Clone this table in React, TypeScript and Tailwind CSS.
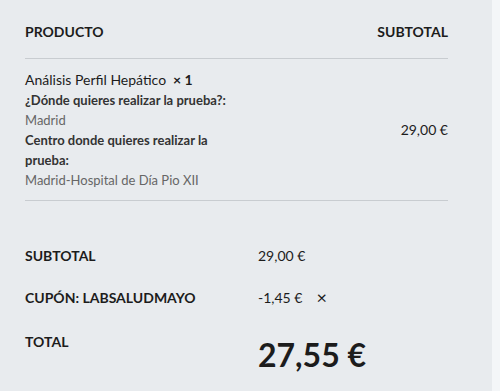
import React from "react";

const lines = [
  { label: "¿Dónde quieres realizar la prueba?:", value: "Madrid" },
  { label: "Centro donde quieres realizar la prueba:", value: "Madrid-Hospital de Día Pio XII" },
];

export default function App() {
  return (
    <div className="w-[500px] h-[391px] bg-[#f4f6f8] font-['Lato',sans-serif] text-[#1c1c1c]">
      <div className="w-[492px] h-full bg-[#e8ebee] pl-[25px] pr-[44px]">
        {/* header */}
        <div className="flex justify-between pt-[22px] pb-[16px] border-b border-[#c8ccd0] text-[14px] leading-[20px] font-bold">
          <span>PRODUCTO</span>
          <span>SUBTOTAL</span>
        </div>

        {/* product row */}
        <div className="flex items-center pt-[11px] pb-[10px] border-b border-[#c8ccd0]">
          <div className="w-[225px]">
            <div className="text-[14px] leading-[20px]">
              Análisis Perfil Hepático <strong className="font-bold">&nbsp;× 1</strong>
            </div>
            {lines.map((l) => (
              <div key={l.label} className="text-[13px] leading-[20px]">
                <div className="font-bold text-[#333]">{l.label}</div>
                <div className="text-[#666]">{l.value}</div>
              </div>
            ))}
          </div>
          <div className="flex-1 text-right text-[14px] leading-[20px]">29,00 €</div>
        </div>

        {/* totals */}
        <div className="pt-[44px]">
          <div className="flex items-center h-[20px]">
            <span className="w-[233px] text-[14px] font-bold">SUBTOTAL</span>
            <span className="text-[14px]">29,00 €</span>
          </div>
          <div className="flex items-center h-[20px] mt-[22px]">
            <span className="w-[233px] text-[14px] font-bold">CUPÓN: LABSALUDMAYO</span>
            <span className="text-[14px]">-1,45 €</span>
            <span className="ml-[14px] text-[18px] leading-none">×</span>
          </div>
          <div className="flex items-start mt-[25px]">
            <span className="w-[233px] text-[14px] leading-[20px] font-bold">TOTAL</span>
            <span className="mt-[3px] text-[32px] leading-[40px] font-bold">27,55 €</span>
          </div>
        </div>
      </div>
    </div>
  );
}
